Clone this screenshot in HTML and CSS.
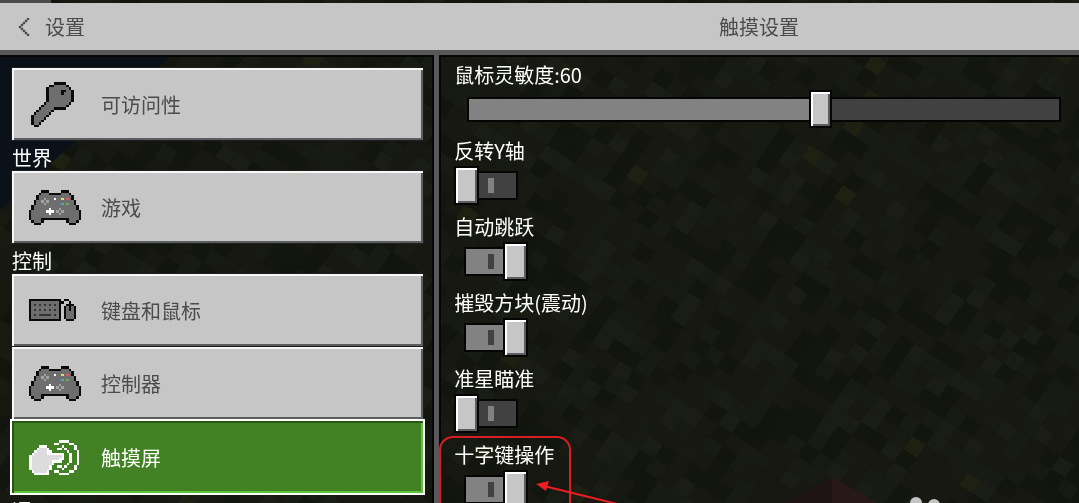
FILE: index.html
```html
<!DOCTYPE html>
<html lang="zh-CN">
<head>
    <meta charset="UTF-8">
    <meta name="viewport" content="width=device-width, initial-scale=1.0">
    <title>触摸设置</title>
    <link rel="stylesheet" href="styles.css">
</head>
<body>
    <!-- World behind the menu -->
    <canvas id="world" class="world"></canvas>

    <div class="tab-strip"><span></span></div>

    <header class="top-bar">
        <button type="button" class="back">
            <svg viewBox="0 0 7 9" aria-hidden="true"><path d="M5 0h1v1h-1zM4 1h1v1h-1zM3 2h1v1h-1zM2 3h1v1h-1zM1 4h1v1h-1zM2 5h1v1h-1zM3 6h1v1h-1zM4 7h1v1h-1zM5 8h1v1h-1z"/></svg>
            设置
        </button>
        <h1>触摸设置</h1>
    </header>

    <div class="columns">
        <!-- Section list -->
        <nav class="sidebar">
            <button type="button" class="item"><svg class="icon icon-key" data-sprite="key"></svg>可访问性</button>
            <h2>世界</h2>
            <button type="button" class="item"><svg class="icon icon-pad" data-sprite="pad"></svg>游戏</button>
            <h2>控制</h2>
            <button type="button" class="item"><svg class="icon icon-keyboard" data-sprite="keyboard"></svg>键盘和鼠标</button>
            <button type="button" class="item"><svg class="icon icon-pad" data-sprite="pad"></svg>控制器</button>
            <button type="button" class="item active"><svg class="icon icon-touch" data-sprite="touch"></svg>触摸屏</button>
            <h2>通用</h2>
        </nav>

        <!-- Touch options -->
        <main class="options">
            <div class="option">
                <label for="sensitivity">鼠标灵敏度:60</label>
                <input type="range" id="sensitivity" class="slider" min="0" max="100" value="60">
            </div>
            <div class="option">
                <label for="invert">反转Y轴</label>
                <input type="checkbox" id="invert" class="toggle">
            </div>
            <div class="option">
                <label for="jump">自动跳跃</label>
                <input type="checkbox" id="jump" class="toggle" checked>
            </div>
            <div class="option">
                <label for="vibrate">摧毁方块(震动)</label>
                <input type="checkbox" id="vibrate" class="toggle" checked>
            </div>
            <div class="option">
                <label for="aim">准星瞄准</label>
                <input type="checkbox" id="aim" class="toggle">
            </div>
            <div class="option marked">
                <label for="dpad">十字键操作</label>
                <input type="checkbox" id="dpad" class="toggle" checked>
                <svg class="arrow" viewBox="0 0 120 40" aria-hidden="true">
                    <path d="M8 6L118 33" stroke="#ee1c23" stroke-width="2"/>
                    <path d="M0 4L13 1L10 11z" fill="#ee1c23"/>
                </svg>
            </div>
        </main>
    </div>

    <svg class="watermark" viewBox="0 0 30 14" aria-hidden="true">
        <circle cx="6" cy="6" r="6"/>
        <circle cx="24" cy="8" r="6"/>
    </svg>

    <script src="script.js"></script>
</body>
</html>
```
FILE: styles.css
```css
*, *::before, *::after {
    box-sizing: border-box;
}
body {
    margin: 0;
    height: 100vh;
    display: flex;
    flex-direction: column;
    overflow: hidden;
    background-color: #161811;
    color: #fff;
    font-family: "Noto Sans CJK SC", sans-serif;
    font-size: 20px;
}
h1, h2 {
    margin: 0;
    font-size: 20px;
    font-weight: 400;
}
button {
    font: inherit;
    cursor: pointer;
}
.world {
    position: fixed;
    inset: 0;
    z-index: -1;
    width: 100%;
    height: 100%;
}
.tab-strip {
    flex: none;
    height: 3px;
}
.tab-strip span {
    display: block;
    width: 51px;
    height: 3px;
    background-color: #4a4a4a;
}

/* Header */
.top-bar {
    flex: none;
    display: grid;
    grid-template-columns: 40.7% 1fr;
    align-items: center;
    height: 52px;
    border-bottom: 5px solid #58585a;
    background-color: #c6c6c6;
    color: #4c4c4c;
}
.top-bar h1 {
    line-height: 28px;
    text-align: center;
}
.back {
    display: flex;
    align-items: center;
    gap: 14px;
    padding: 0 0 0 17px;
    border: none;
    background: none;
    color: inherit;
    line-height: 28px;
}
.back svg {
    width: 14px;
    height: 18px;
    fill: #4c4c4c;
    stroke: #4c4c4c;
    stroke-width: 0.2;
}

.columns {
    flex: 1;
    min-height: 0;
    display: grid;
    grid-template-columns: 40.7% 1fr;
}

/* Sidebar */
.sidebar {
    overflow: hidden;
    padding: 13px 11px 0 12px;
    border-right: 5px solid #58585a;
    box-shadow: inset -2px 2px #050505;
}
.sidebar h2 {
    height: 30px;
    padding-top: 3px;
    line-height: 28px;
}
.item {
    display: flex;
    align-items: center;
    gap: 20px;
    width: 100%;
    height: 72px;
    margin-bottom: 1px;
    padding: 0 17px;
    border: none;
    outline: 1px solid #1e1e1f;
    background-color: #c6c6c6;
    box-shadow: inset 2px 2px #f7f7f7, inset -2px -2px #5c5d60;
    color: #4c4c4c;
}
.item.active {
    position: relative;
    margin-top: 2px;
    outline: 2px solid #fff;
    background-color: #428225;
    box-shadow: inset 2px 2px #2b5613, inset -2px -2px #5fc43a;
    color: #fff;
}
.icon {
    flex: none;
    shape-rendering: crispEdges;
}
.icon-key {
    width: 43px;
    height: 45px;
    margin: 0 7px 0 2px;
}
.icon-pad {
    width: 52px;
    height: 35px;
}
.icon-keyboard {
    width: 47px;
    height: 22px;
    margin-right: 5px;
}
.icon-touch {
    width: 50px;
    height: 35px;
    margin-right: 2px;
}

/* Options */
.options {
    overflow: hidden;
    padding: 6px 18px 0 15px;
    box-shadow: inset 2px 2px #050505;
}
.option {
    display: flex;
    flex-direction: column;
    height: 76px;
}
.option label {
    line-height: 28px;
}
.slider {
    appearance: none;
    height: 38px;
    margin: 1px 0 0 13px;
    background: none;
}
.slider::-webkit-slider-runnable-track {
    height: 25px;
    border: 2px solid #050505;
    background: linear-gradient(to right, #828282 60%, #414141 60%);
}
.slider::-webkit-slider-thumb {
    appearance: none;
    box-sizing: border-box;
    width: 23px;
    height: 38px;
    margin-top: -9px;
    border: 2px solid #050505;
    background-color: #c6c6c6;
    box-shadow: inset 2px 2px #fff, inset -2px -2px #5c5d60;
}
.toggle {
    appearance: none;
    position: relative;
    width: 54px;
    height: 29px;
    margin: 6px 0 0 10px;
    border: 2px solid #050505;
    background-color: #414141;
}
.toggle::before {
    content: "";
    position: absolute;
    top: 5px;
    left: 22px;
    width: 6px;
    height: 15px;
    background-color: #828282;
}
.toggle::after {
    content: "";
    position: absolute;
    top: -7px;
    left: -12px;
    width: 25px;
    height: 39px;
    border: 2px solid #050505;
    background-color: #c6c6c6;
    box-shadow: inset 2px 2px #fff, inset -2px -2px #5c5d60;
}
.toggle:checked {
    background-color: #828282;
}
.toggle:checked::before {
    background-color: #414141;
}
.toggle:checked::after {
    left: 37px;
}

/* Highlight around the d-pad option */
.marked {
    position: relative;
}
.marked::before {
    content: "";
    position: absolute;
    top: -5px;
    left: -15px;
    width: 132px;
    height: 100px;
    border: 2px solid #d81e25;
    border-radius: 14px;
}
.arrow {
    position: absolute;
    top: 39px;
    left: 82px;
    width: 120px;
    height: 40px;
}
.watermark {
    position: absolute;
    right: 139px;
    bottom: -8px;
    width: 30px;
    height: 14px;
    fill: #c4c4c4;
}
```
FILE: script.js
```js
const colors = {
    k: '#0a0a0a',
    g: '#6e6e6e',
    d: '#a3a3a3',
    e: '#333333',
    w: '#ffffff',
    s: '#dcdcdc',
    y: '#e6d860',
    r: '#d9566c',
    b: '#4fa3d8',
    n: '#6fa84f'
};

const sprites = {
    key: [
        '.........kkkkk...',
        '.......kkgggggk..',
        '......kggggggggk.',
        '......kgggggkkggk',
        '......kgggggkgggk',
        '......kgggggggggk',
        '......kgggggggggk',
        '......kgggggggggk',
        '.....kgggggggggk.',
        '....kgggggggggk..',
        '...kgggggkkkkk...',
        '..kgggggk........',
        '.kgggggk.........',
        'kgggggk..........',
        'kggggk...........',
        'kgggk............',
        'kggk.............',
        '.kk..............'
    ],
    pad: [
        '.....kkk.....kkk.....',
        '....kgggkkkkkgggk....',
        '...kgggggggggggggk...',
        '...kggdgggwggygrgk...',
        '..kggdgdggggggggggk..',
        '..kgggdggggggbgnggk..',
        '.kgggggggggggggggggk.',
        '.kggggggwgggdggggggk.',
        'kggggggwwwgdgdggggggk',
        'kgggggggwgggdgggggggk',
        'kgggggggggggggggggggk',
        'kggggkkkkkkkkkkkggggk',
        '.kgggk.........kgggk.',
        '..kkk...........kkk..'
    ],
    keyboard: [
        'kkkkkkkkkkkkk.kk...',
        'kgggggggggggkk..k..',
        'kgegegegegegk..kkk.',
        'kgggggggggggk.kgkgk',
        'kgegegegegegk.kgkgk',
        'kgggggggggggk.kgggk',
        'kgegeeeeegegk.kgggk',
        'kgggggggggggk.kgggk',
        'kkkkkkkkkkkkk..kkk.'
    ],
    touch: [
        '............wwww....',
        '..........ww....ww..',
        '....www......w....w.',
        '...wsssw...ww.w...w.',
        '..wssssww......w...w',
        '.wssssswwwwwww..w..w',
        'wssssssssssssw..w..w',
        'wsssssssssssww..w..w',
        'wsssssssswwww...w..w',
        'wssssssssw.....w...w',
        'wsssssssw..ww.w...w.',
        'wsssssssw....w....w.',
        '.wsssssw..ww....ww..',
        '..wwwwww....wwww....'
    ]
};

function drawSprite(svg) {
    const rows = sprites[svg.dataset.sprite];
    let rects = '';
    rows.forEach((row, y) => {
        [...row].forEach((c, x) => {
            if (colors[c]) {
                rects += `<rect x="${x}" y="${y}" width="1" height="1" fill="${colors[c]}"/>`;
            }
        });
    });
    svg.setAttribute('viewBox', `0 0 ${rows[0].length} ${rows.length}`);
    svg.setAttribute('preserveAspectRatio', 'none');
    svg.innerHTML = rects;
}

function polygon(ctx, points, color) {
    ctx.fillStyle = color;
    ctx.beginPath();
    points.forEach(([x, y]) => ctx.lineTo(x, y));
    ctx.fill();
}

// Dark leaf blocks seen at an angle, with sky in the left corner
function drawWorld() {
    const canvas = document.getElementById('world');
    const w = canvas.width = window.innerWidth;
    const h = canvas.height = window.innerHeight;
    const ctx = canvas.getContext('2d');
    const shades = ['#161811', '#161811', '#171a13', '#13160f', '#1a1d15', '#161811', '#12150e', '#181b13'];
    let seed = 20711;
    const random = () => {
        seed = (seed * 48271) % 2147483647;
        return seed / 2147483647;
    };

    ctx.fillStyle = '#161811';
    ctx.fillRect(0, 0, w, h);
    for (let i = -30; i < 110; i++) {
        for (let j = -70; j < 70; j++) {
            const x = i * 14 - j * 9;
            const y = i * 9 + j * 13;
            const color = random() < 0.015 ? '#1e2012' : shades[Math.floor(random() * shades.length)];
            if (x < -30 || x > w + 30 || y < -30 || y > h + 30) continue;
            polygon(ctx, [[x, y], [x + 14, y + 9], [x + 5, y + 22], [x - 9, y + 13]], color);
        }
    }
    polygon(ctx, [[0, 3], [220, 3], [170, 57], [73, 143], [0, 210]], '#0b1119');
    polygon(ctx, [[832, h - 26], [832, h], [780, h]], '#1e1413');
    polygon(ctx, [[832, h - 26], [877, h], [832, h]], '#281918');
}

document.querySelectorAll('[data-sprite]').forEach(drawSprite);
drawWorld();
window.addEventListener('resize', drawWorld);
```
